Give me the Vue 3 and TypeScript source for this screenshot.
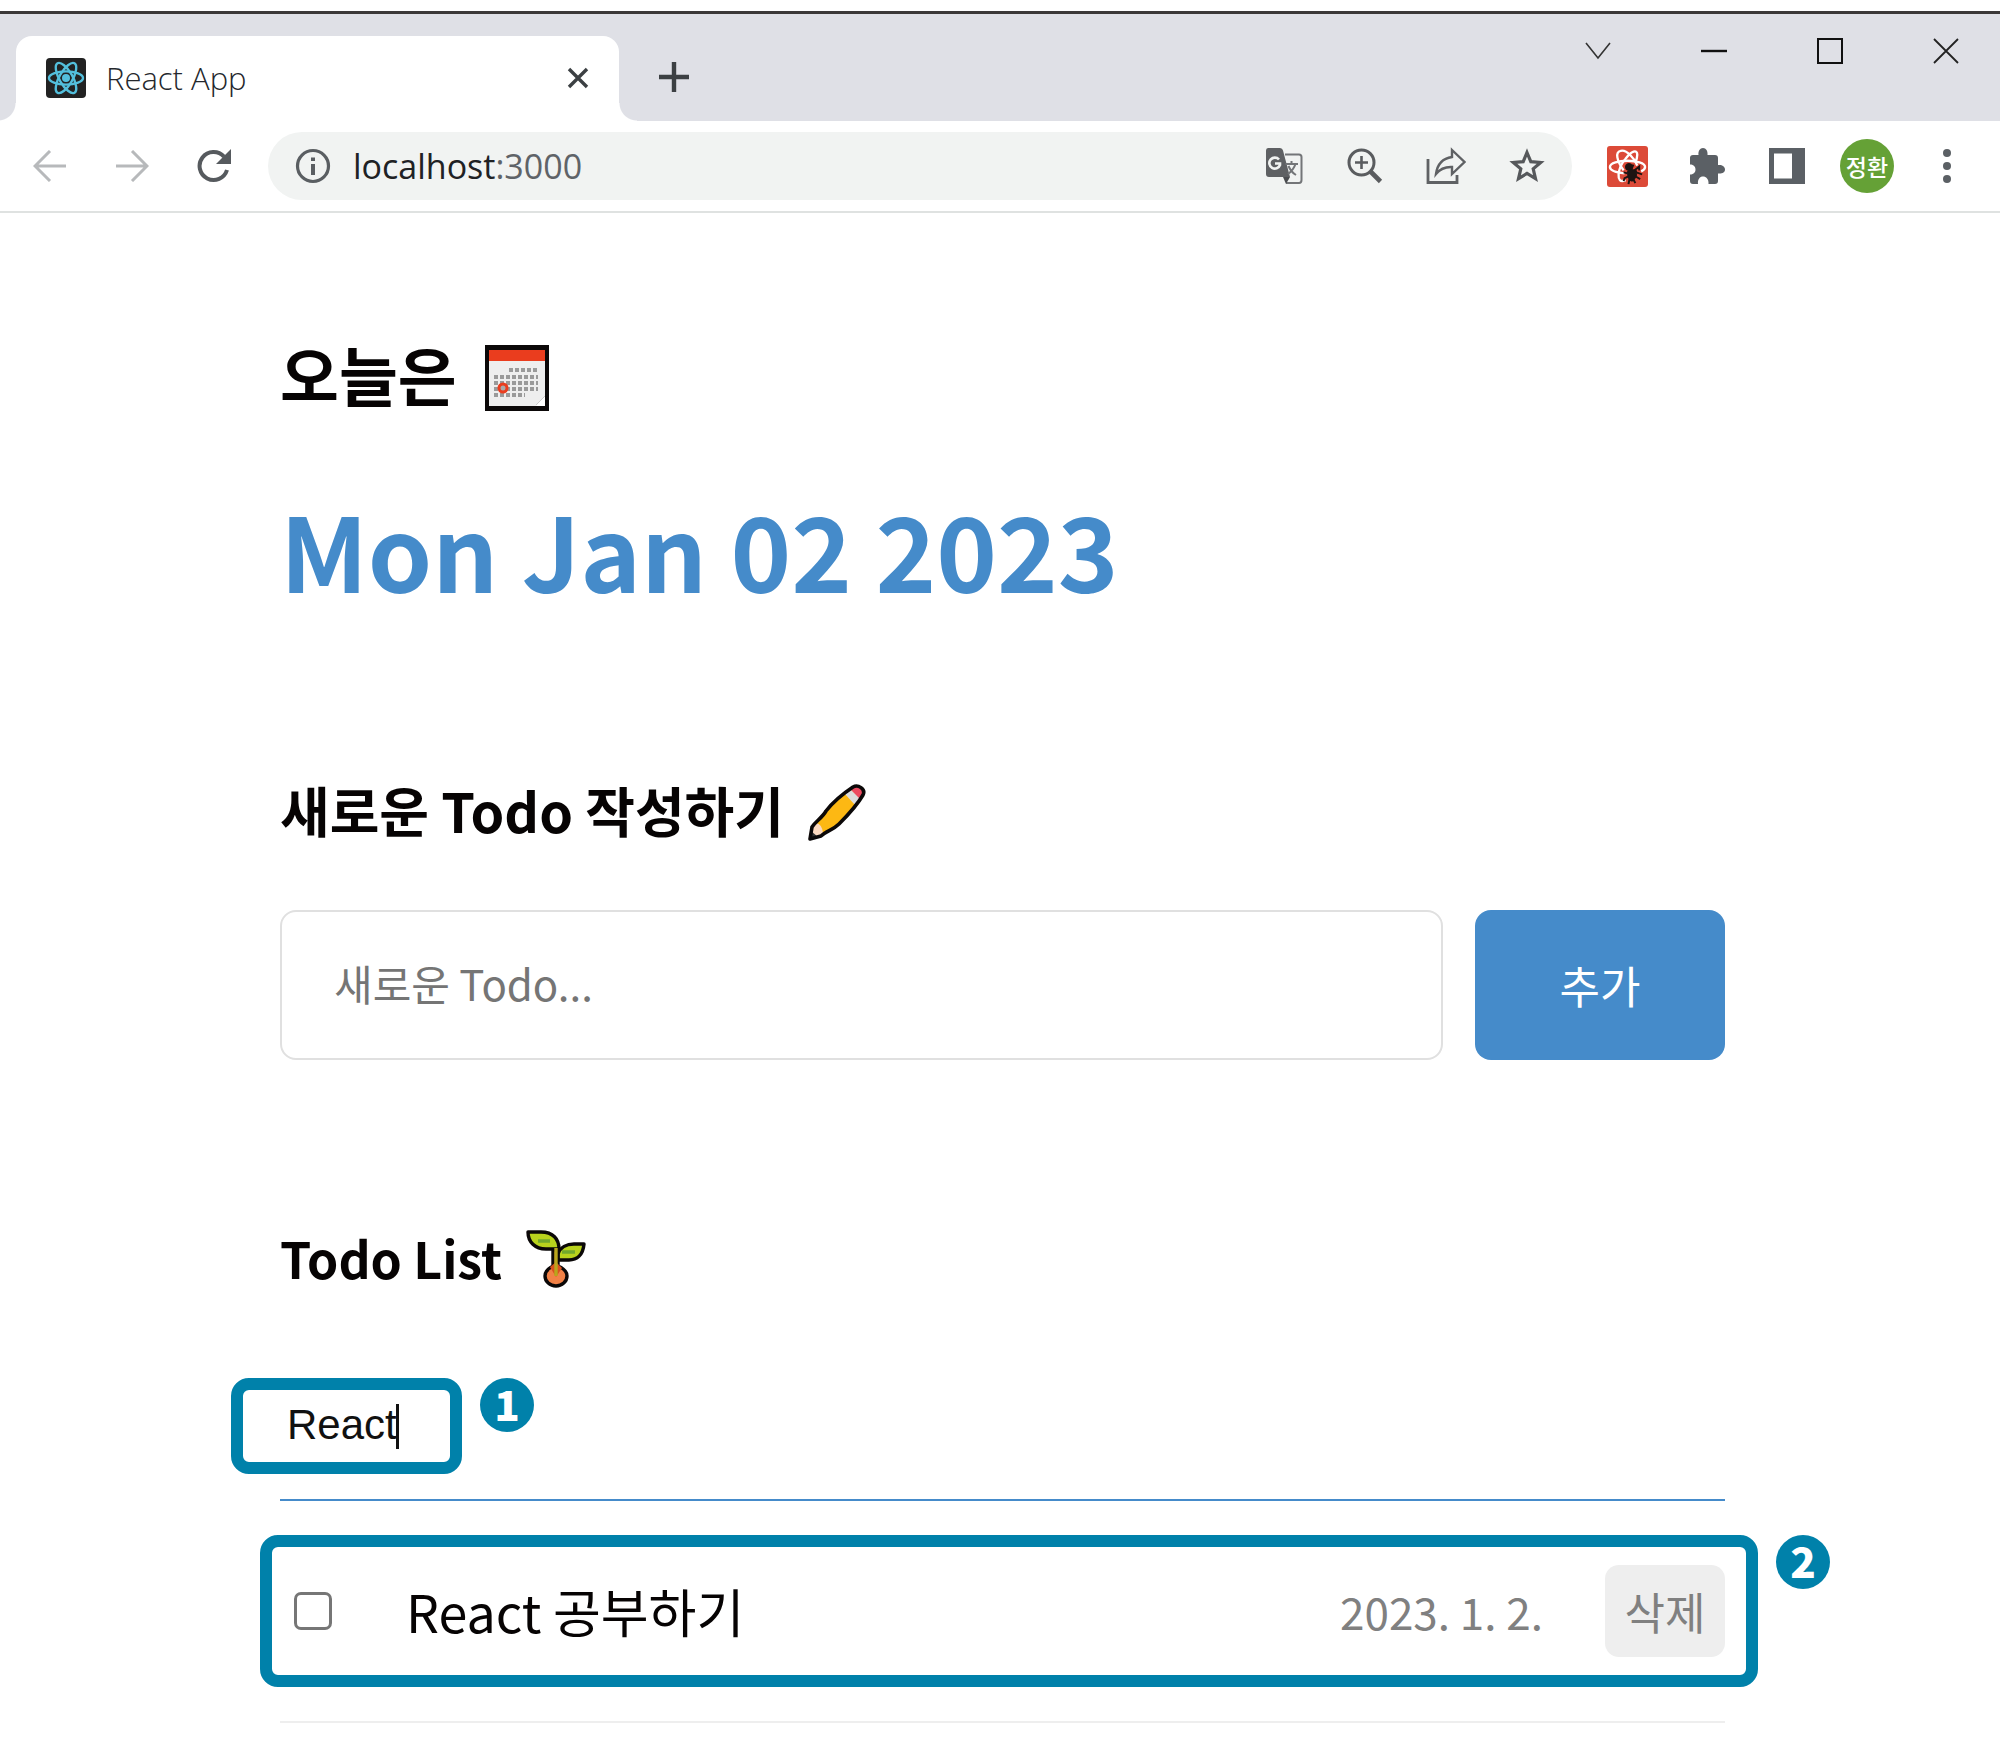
<script setup lang="ts">
import { computed, ref } from 'vue'

interface Todo {
  id: number
  content: string
  date: string
  isDone: boolean
}

const today = 'Mon Jan 02 2023'
const draft = ref('')
const search = ref('React')
const todos = ref<Todo[]>([{ id: 0, content: 'React 공부하기', date: '2023. 1. 2.', isDone: false }])

const visibleTodos = computed(() =>
  todos.value.filter((t) => t.content.toLowerCase().includes(search.value.toLowerCase())),
)

function addTodo() {
  if (!draft.value) return
  todos.value.unshift({ id: Date.now(), content: draft.value, date: '2023. 1. 2.', isDone: false })
  draft.value = ''
}

function removeTodo(id: number) {
  todos.value = todos.value.filter((t) => t.id !== id)
}
</script>

<template>
  <div class="window">
    <header class="tabstrip">
      <div class="tab">
        <svg class="favicon" viewBox="0 0 40 40" aria-hidden="true">
          <rect width="40" height="40" rx="4" fill="#222" />
          <g fill="none" stroke="#53bfdc" stroke-width="2.400">
            <ellipse cx="20" cy="20" rx="17" ry="6.6" />
            <ellipse cx="20" cy="20" rx="17" ry="6.6" transform="rotate(60 20 20)" />
            <ellipse cx="20" cy="20" rx="17" ry="6.6" transform="rotate(120 20 20)" />
          </g>
          <circle cx="20" cy="20" r="4" fill="#53bfdc" />
        </svg>
        <span class="tab-title">React App</span>
        <button class="icon-button small" aria-label="Close tab">
          <svg width="22" height="22" viewBox="0 0 22 22"><path d="M2 2 20 20M20 2 2 20" stroke="#3c4043" stroke-width="3.4" /></svg>
        </button>
      </div>
      <button class="icon-button small new-tab" aria-label="New tab">
        <svg width="30" height="30" viewBox="0 0 30 30"><path d="M15 0V30M0 15H30" stroke="#3c4043" stroke-width="4.400" /></svg>
      </button>
      <div class="window-controls">
        <button class="icon-button" aria-label="Search tabs">
          <svg width="26" height="18" viewBox="0 0 26 18"><path d="M1 1 13 16 25 1" fill="none" stroke="#333" stroke-width="1.6" /></svg>
        </button>
        <button class="icon-button" aria-label="Minimize">
          <svg width="26" height="4" viewBox="0 0 26 4"><path d="M0 2H26" stroke="#111" stroke-width="2.4" /></svg>
        </button>
        <button class="icon-button" aria-label="Maximize">
          <svg width="26" height="26" viewBox="0 0 26 26"><rect x="1" y="1" width="24" height="24" fill="none" stroke="#111" stroke-width="2" /></svg>
        </button>
        <button class="icon-button" aria-label="Close">
          <svg width="26" height="26" viewBox="0 0 26 26"><path d="M1 1 25 25M25 1 1 25" stroke="#222" stroke-width="1.8" /></svg>
        </button>
      </div>
    </header>

    <nav class="toolbar" aria-label="Browser toolbar">
      <div class="nav-buttons">
        <button class="icon-button" aria-label="Back">
          <svg width="34" height="32" viewBox="0 0 34 32"><path d="M33 16H3M17 1 2 16 17 31" fill="none" stroke="#b7b9bb" stroke-width="3" /></svg>
        </button>
        <button class="icon-button" aria-label="Forward">
          <svg width="34" height="32" viewBox="0 0 34 32"><path d="M1 16H31M17 1 32 16 17 31" fill="none" stroke="#b7b9bb" stroke-width="3" /></svg>
        </button>
        <button class="icon-button" aria-label="Reload">
          <svg width="36" height="34" viewBox="0 0 36 34">
            <path d="M31 21A14 14 0 1 1 28 7.6" fill="none" stroke="#565a5e" stroke-width="4" />
            <path d="M35 0V15H20Z" fill="#565a5e" />
          </svg>
        </button>
      </div>
      <div class="omnibox">
        <button class="omni-icon" aria-label="Site information">
          <svg width="36" height="36" viewBox="0 0 36 36">
            <circle cx="18" cy="18" r="15.5" fill="none" stroke="#5a5e62" stroke-width="3.2" />
            <path d="M18 16V27M18 9.5V13" stroke="#5a5e62" stroke-width="4" />
          </svg>
        </button>
        <p class="url">localhost<span>:3000</span></p>
        <button class="omni-icon" aria-label="Translate">
          <svg width="38" height="38" viewBox="0 0 38 38">
            <path d="M20 7.500H34Q36.500 7.500 36.500 10V33Q36.500 36 34 36H21" fill="#f1f3f2" stroke="#737578" stroke-width="2" />
            <path d="M3 1H15Q17.500 1 18 3.500L25 30H4Q1 30 1 27V3.500Q1 1 3 1Z" fill="#5e6063" />
            <path d="M18 30H25L21 37Z" fill="#4a4c4f" />
            <path d="M14 12.500A5.500 5.500 0 1 0 15 18V16.500H10" fill="none" stroke="#f1f3f2" stroke-width="2.600" />
            <path d="M20.500 17H33M26.500 14V17M30.500 17Q28.500 23 23 27M23.500 19Q26 25 31 28" fill="none" stroke="#737578" stroke-width="2" />
          </svg>
        </button>
        <button class="omni-icon" aria-label="Zoom">
          <svg width="36" height="36" viewBox="0 0 36 36">
            <circle cx="14.500" cy="14.500" r="12.500" fill="none" stroke="#5a5c5f" stroke-width="3" />
            <path d="M14.500 8V21M8 14.500H21" stroke="#5a5c5f" stroke-width="2.600" />
            <path d="M23.500 23.500 33.500 33.500" stroke="#5a5c5f" stroke-width="4.600" />
          </svg>
        </button>
        <button class="omni-icon" aria-label="Share">
          <svg width="40" height="38" viewBox="0 0 40 38" fill="none" stroke="#5f6164">
            <path d="M2 12V35.500H31V28" stroke-width="2.800" />
            <path d="M26 3 38.500 15 26 27V20Q16 19.500 10 27Q12 12 26 10Z" stroke-width="2.400" />
          </svg>
        </button>
        <button class="omni-icon" aria-label="Bookmark">
          <svg width="36" height="36" viewBox="0 0 36 36">
            <path d="M18 4.500 21.800 13.700 31.700 14.500 24.200 20.900 26.500 30.600 18 25.400 9.500 30.600 11.800 20.900 4.300 14.500 14.200 13.700Z" fill="none" stroke="#56585b" stroke-width="3.200" />
          </svg>
        </button>
      </div>
      <div class="extensions">
        <button class="icon-button" aria-label="React Developer Tools">
          <svg width="41" height="41" viewBox="0 0 42 42">
            <rect width="42" height="42" rx="3" fill="#dc4a38" />
            <g fill="none" stroke="#fff" stroke-width="2.400">
              <path d="M18 28C9 27 3 25 3 21.500C3 13 39 13 39 21.500Q39 24 35 26" />
              <path d="M17 25C10 15 8 6 14 5C20 3 29 14 31 20" />
              <path d="M19 35C8 40 11 22 19 13C25 5 31 3 31 9Q31 13 29 17" />
            </g>
            <g fill="#1d1412" stroke="#1d1412">
              <circle cx="22.500" cy="21.500" r="3.600" />
              <path d="M21 26Q25 23 30 25Q32 31 26 36Q21 36 21 26Z" />
              <path d="M25 24 27 19M28 25 33 21V25M21 28 17 27M22 31 18 33 17 36M23 34 22 39M30 27 36 29M29 31 34 34M27 34 29 38" fill="none" stroke-width="2" />
            </g>
          </svg>
        </button>
        <button class="icon-button" aria-label="Extensions">
          <svg width="36" height="36" viewBox="0 0 36 36">
            <path d="M4 7H9.500C9 3 11 0 14 0S19 3 18.500 7H26Q29 7 29 10V17C33 16.500 36 18.500 36 21.500S33 26 29 25.500V33Q29 36 26 36H19.500C20 31 17 28.500 14 28.500S8.500 31 9 36H4Q1 36 1 33V26.500C4 26.500 6.500 25 6.500 21.500S4 16.500 1 16.500V10Q1 7 4 7Z" fill="#5b6065" />
          </svg>
        </button>
        <button class="icon-button" aria-label="Side panel">
          <svg width="36" height="36" viewBox="0 0 36 36"><path d="M0 0H36V36H0ZM5 5.500V30.500H23V5.500Z" fill="#5b6065" fill-rule="evenodd" /></svg>
        </button>
        <button class="avatar" aria-label="Profile">정환</button>
        <button class="icon-button" aria-label="Menu">
          <svg width="10" height="36" viewBox="0 0 10 36" fill="#5b6065">
            <circle cx="5" cy="5" r="4" /><circle cx="5" cy="18" r="4" /><circle cx="5" cy="31" r="4" />
          </svg>
        </button>
      </div>
    </nav>

    <main class="page">
      <section class="today">
        <h3>
          <span>오늘은</span>
          <svg width="64" height="66" viewBox="0 0 64 66" aria-hidden="true">
            <rect width="64" height="66" fill="#0b0808" />
            <rect x="4" y="5" width="56" height="56" fill="#eee" />
            <rect x="4" y="5" width="56" height="11" fill="#ea3d1e" />
            <path d="M24 25H53M9 32H53M9 38H53M9 44H53M9 50H40" stroke="#9a9a9a" stroke-width="4" stroke-dasharray="4 2" />
            <circle cx="18" cy="43" r="4" fill="#aaa" stroke="#ea3d1e" stroke-width="3" />
            <path d="M60 51V61H51Z" fill="#fff" /><path d="M51 60 60 51" stroke="#ccc" />
          </svg>
        </h3>
        <h1>{{ today }}</h1>
      </section>

      <section class="editor">
        <h4>
          <span>새로운 Todo 작성하기</span>
          <svg width="58" height="58" viewBox="0 0 58 58" aria-hidden="true">
            <path d="M2 56 4 44C8 38 14 35 18 28C25 19 36 10 45 4C50 1 58 6 55 12C48 24 38 34 31 41C25 47 18 48 13 53Z" fill="#fdb813" />
            <path d="M42 6C48 -1 60 4 54 14L52 17Z" fill="#ec4a60" />
            <path d="M42 6 52 16 47 22 37 11Z" fill="#dcdcdc" />
            <path d="M4 44 8 40Q14 41 15 50L9 55 3 52Z" fill="#fcd9c0" />
            <path d="M3 48 10 54 2 57Z" fill="#333" />
            <path d="M2 56 4 44C8 38 14 35 18 28C25 19 36 10 45 4C50 1 58 6 55 12C48 24 38 34 31 41C25 47 18 48 13 53Z" fill="none" stroke="#0b0808" stroke-width="3.600" stroke-linejoin="round" />
          </svg>
        </h4>
        <form class="editor-form" @submit.prevent="addTodo">
          <input v-model="draft" type="text" placeholder="새로운 Todo..." aria-label="새로운 Todo" />
          <button type="submit">추가</button>
        </form>
      </section>

      <section class="list">
        <h4>
          <span>Todo List</span>
          <svg width="60" height="58" viewBox="0 0 60 58" aria-hidden="true">
            <g stroke="#0b0808" stroke-width="3.400" stroke-linejoin="round">
              <path d="M2 2H15C27 2 33 9 33 19H20C9 19 2 12 2 2Z" fill="#b9d31d" />
              <path d="M32 24C34 17 41 14 48 14H58C57 25 51 30 43 30H32Z" fill="#b9d31d" />
              <path d="M27 20H32V36C39 39 41 43 41 46A11 10 0 0 1 19 46C19 42 21 39 27 36Z" fill="#f28146" />
            </g>
            <path d="M24 37 30 32 36 38 30 47Z" fill="#d9531e" />
            <path d="M30 18V46" stroke="#b9a51d" stroke-width="3.400" />
            <path d="M12 11H24M36 22H49" stroke="#72a92c" stroke-width="3.600" />
          </svg>
        </h4>
        <div class="search">
          <input v-model="search" type="text" aria-label="검색어" />
          <span class="caret" aria-hidden="true"></span>
          <div class="callout"><b class="marker">1</b></div>
        </div>
        <ul>
          <li v-for="todo in visibleTodos" :key="todo.id">
            <input :id="`todo-${todo.id}`" v-model="todo.isDone" type="checkbox" />
            <label :for="`todo-${todo.id}`">{{ todo.content }}</label>
            <time datetime="2023-01-02">{{ todo.date }}</time>
            <button type="button" @click="removeTodo(todo.id)">삭제</button>
            <div class="callout"><b class="marker">2</b></div>
          </li>
        </ul>
      </section>
    </main>
  </div>
</template>

<style>
body {
  margin: 0;
  background: #fff;
}
</style>

<style scoped>
* {
  box-sizing: border-box;
}

.window {
  padding-top: 11px;
  font-family: 'Noto Sans CJK KR', 'Noto Sans', sans-serif;
  color: #060303;
}

svg {
  display: block;
  flex: none;
}

button,
input {
  margin: 0;
  font-family: inherit;
}

h1,
h3,
h4,
p,
ul {
  margin: 0;
  padding: 0;
}

.icon-button {
  display: flex;
  align-items: center;
  justify-content: center;
  flex: none;
  width: 54px;
  height: 54px;
  padding: 0;
  border: 0;
  background: none;
}

.icon-button.small {
  width: 36px;
  height: 36px;
}

/* Tab strip */
.tabstrip {
  display: flex;
  align-items: flex-end;
  height: 110px;
  padding-left: 16px;
  border-top: 3px solid #3b3838;
  background: #dfe0e6;
}

.tab {
  position: relative;
  display: flex;
  align-items: center;
  gap: 20px;
  width: 603px;
  height: 85px;
  padding: 0 23px 2px 30px;
  border-radius: 16px 16px 0 0;
  background: #fff;
}

.tab::before,
.tab::after {
  content: '';
  position: absolute;
  bottom: 0;
  width: 18px;
  height: 18px;
}

.tab::before {
  right: 100%;
  background: radial-gradient(circle at 0 0, transparent 17px, #fff 18px);
}

.tab::after {
  left: 100%;
  background: radial-gradient(circle at 100% 0, transparent 17px, #fff 18px);
}

.favicon {
  width: 40px;
  height: 40px;
}

.tab-title {
  flex: 1;
  font: 300 31px/40px 'Open Sans', 'Noto Sans', sans-serif;
  color: #24272c;
}

.new-tab {
  margin: 0 0 26px 37px;
}

.window-controls {
  display: flex;
  align-self: flex-start;
  gap: 62px;
  margin: 10px 27px 0 auto;
}

/* Toolbar */
.toolbar {
  display: flex;
  align-items: center;
  height: 92px;
  padding: 0 26px 0 23px;
  border-bottom: 2px solid #dfe2e1;
}

.nav-buttons {
  display: flex;
  gap: 28px;
}

.omnibox {
  display: flex;
  flex: 1;
  align-items: center;
  gap: 41px;
  height: 68px;
  margin: 0 28px 0 27px;
  padding: 0 25px;
  border-radius: 34px;
  background: #f1f3f2;
}

.omni-icon {
  display: flex;
  align-items: center;
  justify-content: center;
  width: 40px;
  height: 40px;
  padding: 0;
  border: 0;
  background: none;
}

.url {
  flex: 1;
  margin-left: -21px;
  font: 400 34px/40px 'Open Sans', 'Noto Sans', sans-serif;
  color: #202124;
}

.url span {
  color: #5f6368;
}

.extensions {
  display: flex;
  gap: 26px;
}

.avatar {
  width: 54px;
  height: 54px;
  padding: 0;
  border: 0;
  border-radius: 50%;
  background: #65a136;
  color: #fff;
  font-size: 23px;
  font-weight: 500;
  line-height: 52px;
}

/* Page */
.page {
  display: flex;
  flex-direction: column;
  gap: 166px;
  padding: 122px 13.75% 18px 14%;
}

h3,
h4 {
  display: flex;
  align-items: flex-end;
  font-weight: 700;
}

h3 {
  gap: 28px;
  font-size: 64px;
  line-height: 76px;
}

h1 {
  margin-top: 74px;
  font-size: 103px;
  font-weight: 700;
  line-height: 128px;
  color: #458bca;
}

h4 {
  gap: 24px;
  line-height: 62px;
}

.editor h4 {
  font-size: 54px;
}

.list h4 {
  font-size: 50px;
}

.editor-form {
  display: flex;
  gap: 32px;
  margin-top: 69px;
}

.editor-form input {
  flex: 1;
  min-width: 0;
  height: 150px;
  padding: 0 52px 6px;
  border: 2px solid #e0e0e0;
  border-radius: 16px;
  font-size: 42px;
  outline: none;
}

.editor-form input::placeholder {
  color: #757575;
}

.editor-form button {
  width: 250px;
  height: 150px;
  border: 0;
  border-radius: 16px;
  background: #458bca;
  color: #fff;
  font-size: 44px;
}

.search {
  position: relative;
  margin-top: 63px;
}

.search input {
  display: block;
  width: 100%;
  height: 150px;
  padding: 0 7px;
  border: 0;
  border-bottom: 2px solid #458bca;
  background: none;
  font: 42px 'Liberation Sans', Arial, sans-serif;
  color: #111;
  outline: none;
}

.caret {
  position: absolute;
  left: 116px;
  top: 53px;
  width: 3px;
  height: 45px;
  background: #111;
}

.callout {
  position: absolute;
  border: 12px solid #0081aa;
  border-radius: 18px;
  pointer-events: none;
}

.search .callout {
  left: -49px;
  top: 27px;
  width: 231px;
  height: 96px;
}

li .callout {
  inset: 34px -33px 34px -20px;
}

.marker {
  position: absolute;
  left: calc(100% + 30px);
  top: -12px;
  width: 54px;
  height: 54px;
  border-radius: 50%;
  background: #0081aa;
  color: #fff;
  font-size: 42px;
  font-weight: 900;
  line-height: 50px;
  text-align: center;
}

ul {
  list-style: none;
}

li {
  position: relative;
  display: flex;
  align-items: center;
  height: 222px;
  padding-left: 14px;
  border-bottom: 2px solid #eee;
}

li > input {
  appearance: none;
  flex: none;
  width: 38px;
  height: 38px;
  border: 3px solid #767676;
  border-radius: 7px;
}

li > label {
  flex: 1;
  margin-left: 74px;
  font-size: 52px;
  line-height: 72px;
}

time {
  font-size: 44px;
  color: #808080;
}

li > button {
  width: 120px;
  height: 92px;
  margin-left: 62px;
  padding: 0;
  border: 0;
  border-radius: 14px;
  background: #eee;
  color: #808080;
  font-size: 44px;
}
</style>
